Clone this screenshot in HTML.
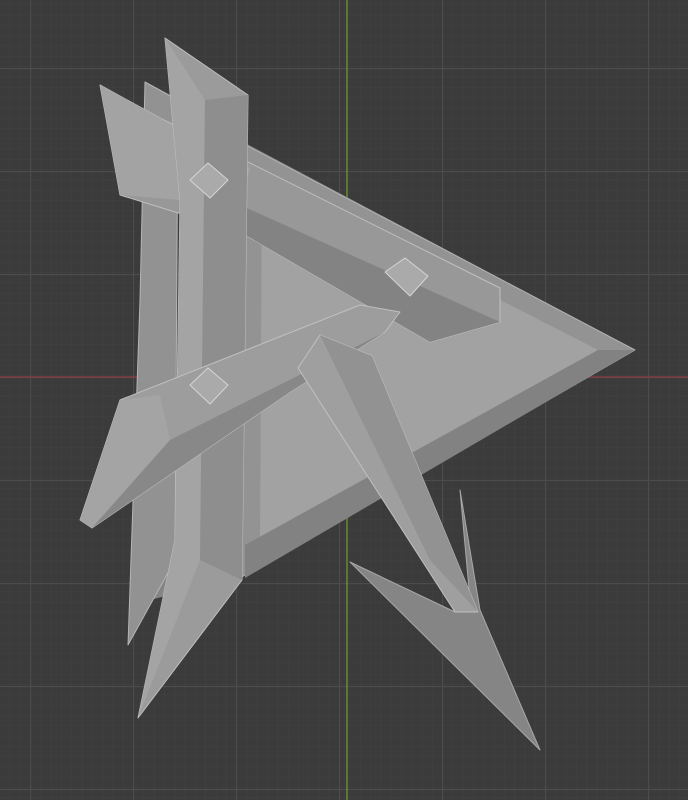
<!DOCTYPE html>
<html><head><meta charset="utf-8"><style>
html,body{margin:0;padding:0;background:#3c3c3c;}
svg{display:block}
</style></head><body>
<svg width="688" height="800" viewBox="0 0 688 800" xmlns="http://www.w3.org/2000/svg">
<defs>
<pattern id="minor" width="10.3" height="10.3" patternUnits="userSpaceOnUse" x="0" y="5">
<path d="M10.3 0V10.3H0" fill="none" stroke="#424242" stroke-width="1"/>
</pattern>
<pattern id="major" width="103" height="103" patternUnits="userSpaceOnUse" x="30" y="68">
<path d="M0.5 0V103M0 0.5H103" fill="none" stroke="#4c4c4c" stroke-width="1.2"/>
</pattern>
</defs>
<rect width="688" height="800" fill="#3b3b3b"/>
<rect width="688" height="800" fill="url(#minor)"/>
<rect width="688" height="800" fill="url(#major)"/>
<line x1="0" y1="377" x2="688" y2="377" fill="none" stroke="#8a3c42" stroke-width="1.3"/>
<line x1="347" y1="0" x2="347" y2="800" stroke="#6c9a2e" stroke-width="1.3"/>

<g stroke-linejoin="round">
<polygon points="230,135 635,350 235,578 150,600" fill="#858585"/>
<polygon points="240,142 635,350 240,578" fill="#939393" stroke="#b0b0b0" stroke-width="1"/>
<polygon points="262,178 598,350 260,545" fill="#a2a2a2"/>
<polygon points="245,545 598,350 635,350 245,578" fill="#828282"/>

<polygon points="145,82 178,100 175,560 128,645 140,300" fill="#929292" stroke="#b5b5b5" stroke-width="1"/>

<!-- upper diagonal bar -->
<polygon points="100,85 160,118 500,288 500,322 430,342 240,232 120,195" fill="#989898" stroke="#c0c0c0" stroke-width="1"/>
<polygon points="100,85 160,118 250,168 240,205 120,195" fill="#a3a3a3"/>
<polygon points="240,205 500,322 430,342 240,232" fill="#838383"/>
<polygon points="385,272 405,258 428,276 410,296" fill="#aaa" stroke="#d5d5d5" stroke-width="1"/>

<!-- tall vertical stick -->
<polygon points="165,38 248,95 242,580 138,718 175,540 180,200" fill="#9b9b9b" stroke="#c0c0c0" stroke-width="1"/>
<polygon points="165,38 205,100 200,560 138,718 175,540 180,200" fill="#a4a4a4"/>
<polygon points="205,100 248,95 242,580 200,560" fill="#8e8e8e"/>
<polygon points="190,180 208,163 228,180 210,198" fill="#aaa" stroke="#d5d5d5" stroke-width="1"/>

<!-- lower diagonal bar -->
<polygon points="80,520 120,400 360,305 400,312 385,332 290,392 92,528" fill="#9d9d9d" stroke="#c0c0c0" stroke-width="1"/>
<polygon points="80,520 120,400 160,395 170,440 92,528" fill="#a4a4a4"/>
<polygon points="170,440 385,332 290,392 92,528" fill="#888"/>
<polygon points="190,385 208,368 228,385 210,404" fill="#aaa" stroke="#d5d5d5" stroke-width="1"/>

<!-- arrow -->
<polygon points="460,490 480,610 540,750 350,562 455,612 470,600" fill="#858585" stroke="#a8a8a8" stroke-width="1"/>
<polygon points="298,368 320,335 372,356 478,612 455,612" fill="#9f9f9f" stroke="#c0c0c0" stroke-width="1"/>
<polygon points="320,335 372,356 478,612 430,560" fill="#929292"/>
</g>
</svg>
</body></html>
